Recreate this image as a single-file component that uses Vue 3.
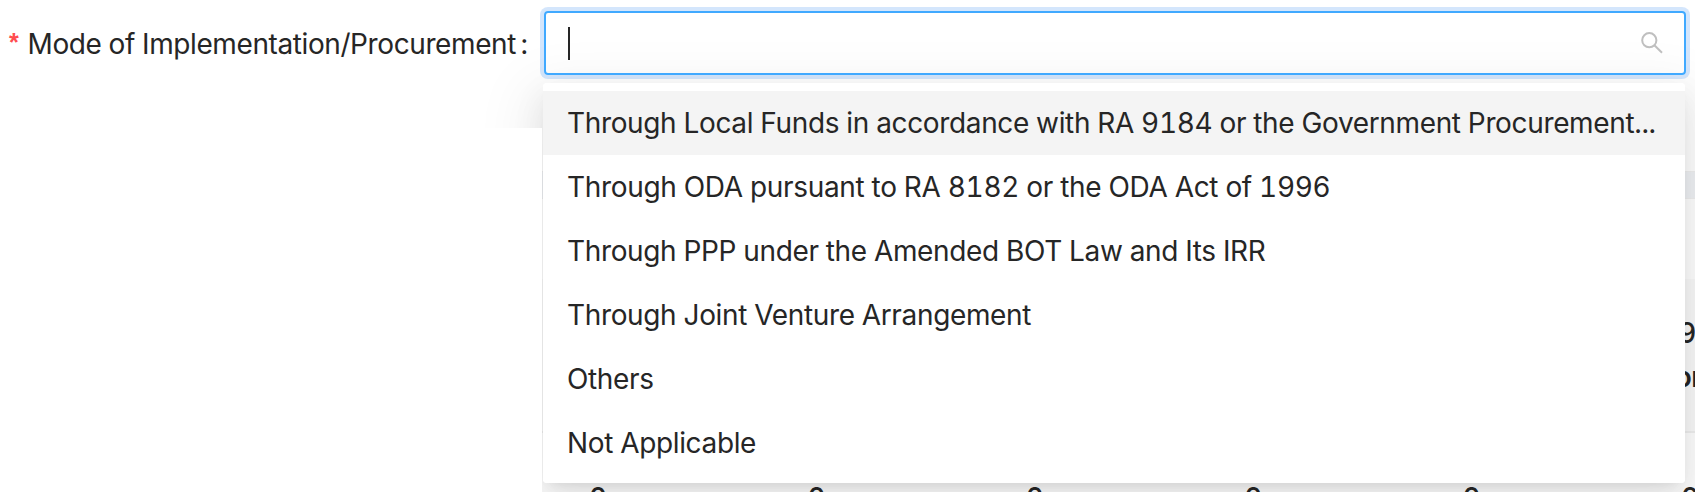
<script setup>
const options = [
  { text: 'Through Local Funds in accordance with RA 9184 or the Government Procurement...', cls: 'active' },
  { text: 'Through ODA pursuant to RA 8182 or the ODA Act of 1996', cls: 'numeric' },
  { text: 'Through PPP under the Amended BOT Law and Its IRR', cls: '' },
  { text: 'Through Joint Venture Arrangement', cls: '' },
  { text: 'Others', cls: '' },
  { text: 'Not Applicable', cls: '' },
]
</script>

<template>
  <div class="page">
    <div class="backdrop">
      <div class="band"></div>
      <div class="head"><span>9</span><b>or</b></div>
      <div class="cells"><span v-for="n in 6" :key="n">0</span></div>
    </div>
    <div class="shade"><div class="shadow"></div></div>
    <div class="form-row">
      <label class="label"><span class="star">*</span><span class="name">Mode of Implementation/Procurement</span><span class="colon">:</span></label>
      <div class="control">
        <i class="caret"></i>
        <svg class="search" viewBox="0 0 24 24" fill="none"><circle cx="9.3" cy="9.2" r="7.1" /><path d="M14.4 14.3 22 21.8" /></svg>
      </div>
    </div>
    <ul class="menu">
      <li v-for="o in options" :key="o.text" :class="o.cls"><span>{{ o.text }}</span></li>
    </ul>
  </div>
</template>

<style>
body { margin: 0; background: #fff; }
</style>
<style scoped>
.page { position: relative; width: 1695px; height: 492px; overflow: hidden; font-family: Inter, "Liberation Sans", sans-serif; font-size: 28px; letter-spacing: -0.4px; font-variant-numeric: tabular-nums; color: #262626; background: #fff; }
.backdrop { position: absolute; left: 542px; top: 128px; width: 1153px; height: 364px; overflow: hidden; }
.band { margin-top: 43px; height: 26px; border-top: 1px solid #f0f0f0; border-bottom: 1px solid #f0f0f0; background: #f0f2f5; }
.head { box-sizing: border-box; margin-top: 80px; height: 154px; padding-top: 32px; background: #fafafa; border-bottom: 2px solid #f0f0f0; display: flex; flex-direction: column; align-items: flex-end; line-height: 44px; font-weight: 500; }
.head span { margin-right: -1px; }
.head b { font-weight: 600; margin-right: -7px; }
.cells { display: flex; width: 1400px; padding-left: 47px; padding-top: 47px; line-height: 36px; font-weight: 500; }
.cells span { width: 218.4px; flex: none; }
.shade { position: absolute; inset: 0; clip-path: polygon(0 0, 100% 0, 100% 100%, 542px 100%, 542px 128px, 0 128px); }
.shadow { position: absolute; left: 543px; top: 83px; width: 1142px; height: 400px; border-radius: 4px; box-shadow: 0 6px 12px -8px rgba(0,0,0,.12), 0 12px 32px rgba(0,0,0,.08), 0 18px 56px 18px rgba(0,0,0,.06); }
.form-row { position: relative; display: flex; padding-top: 11px; height: 72px; box-sizing: content-box; }
.label { width: 544px; height: 64px; display: flex; line-height: 66px; white-space: nowrap; }
.star { width: 18.5px; padding-left: 9px; color: #ff4d4f; font-family: "Liberation Sans", sans-serif; font-weight: 700; font-size: 25px; line-height: 63px; }
.name { width: 493px; }
.control { box-sizing: border-box; width: 1142px; height: 64px; border: 2px solid #40a9ff; border-radius: 4px; box-shadow: 0 0 0 4px rgba(40,130,240,.2); display: flex; justify-content: space-between; align-items: center; padding: 0 20px 0 22px; }
.caret { width: 2px; height: 33px; background: #262626; }
.search { width: 24px; height: 24px; stroke: #bfbfbf; stroke-width: 2; }
.menu { box-sizing: border-box; position: relative; margin: 0 0 0 543px; width: 1142px; height: 400px; padding: 8px 0; list-style: none; border-radius: 4px; background: #fff; letter-spacing: -0.35px; }
.menu li { height: 64px; line-height: 65px; padding-left: 24px; white-space: nowrap; }
.menu .active { background: #f4f4f4; }
.menu .numeric { letter-spacing: -0.32px; }
</style>
